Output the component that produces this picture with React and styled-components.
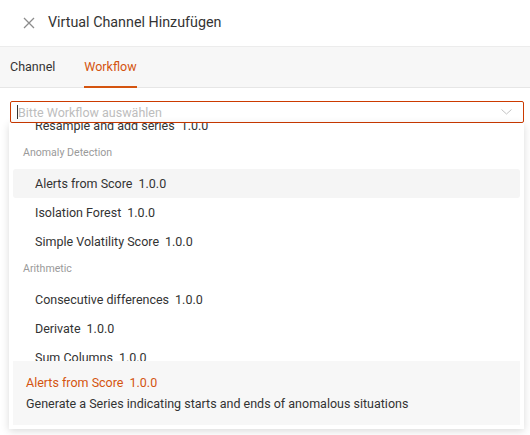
import { useLayoutEffect, useRef } from "react";
import styled, { createGlobalStyle } from "styled-components";

const ACCENT = "#d4540f";

const groups = [
  {
    name: "Resampling",
    items: [{ name: "Resample and add series", version: "1.0.0" }],
  },
  {
    name: "Anomaly Detection",
    anchor: true,
    items: [
      { name: "Alerts from Score", version: "1.0.0", active: true },
      { name: "Isolation Forest", version: "1.0.0" },
      { name: "Simple Volatility Score", version: "1.0.0" },
    ],
  },
  {
    name: "Arithmetic",
    items: [
      { name: "Consecutive differences", version: "1.0.0" },
      { name: "Derivate", version: "1.0.0" },
      { name: "Sum Columns", version: "1.0.0" },
      { name: "Multiply Columns", version: "1.0.0" },
    ],
  },
];

export default function App() {
  const listRef = useRef(null);
  const anchorRef = useRef(null);

  // keep the list scrolled so the highlighted group sits near the top
  useLayoutEffect(() => {
    if (listRef.current && anchorRef.current) {
      listRef.current.scrollTop = anchorRef.current.offsetTop - 17;
    }
  }, []);

  return (
    <>
      <Global />
      <Page>
        <Header>
          <CloseButton aria-label="close">
            <svg width="12" height="12" viewBox="0 0 12 12">
              <path d="M1 1 L11 11 M11 1 L1 11" stroke="#8c8c8c" strokeWidth="1.3" fill="none" />
            </svg>
          </CloseButton>
          <Title>Virtual Channel Hinzufügen</Title>
        </Header>
        <Tabs>
          <Tab>Channel</Tab>
          <Tab active>Workflow</Tab>
        </Tabs>
        <Body>
          <SelectWrap>
            <Select>
              <Caret />
              <Placeholder>Bitte Workflow auswählen</Placeholder>
              <svg width="11" height="6" viewBox="0 0 11 6">
                <path d="M0.5 0.5 L5.5 5 L10.5 0.5" stroke="#c4c4c4" strokeWidth="1" fill="none" />
              </svg>
            </Select>
            <Menu>
              <List ref={listRef}>
                {groups.map((g) => (
                  <div key={g.name}>
                    <GroupLabel ref={g.anchor ? anchorRef : null}>{g.name}</GroupLabel>
                    {g.items.map((it) => (
                      <Item key={it.name} active={it.active}>
                        {it.name}
                        <Version>{it.version}</Version>
                      </Item>
                    ))}
                  </div>
                ))}
              </List>
              <Details>
                <DetailsTitle>
                  Alerts from Score<Version>1.0.0</Version>
                </DetailsTitle>
                <DetailsText>
                  Generate a Series indicating starts and ends of anomalous situations
                </DetailsText>
              </Details>
            </Menu>
          </SelectWrap>
        </Body>
      </Page>
    </>
  );
}

const Global = createGlobalStyle`
  html, body {
    margin: 0;
    background: #fff;
  }
  * {
    box-sizing: border-box;
  }
`;

const Page = styled.div`
  width: 530px;
  height: 435px;
  font-family: Roboto, "Liberation Sans", sans-serif;
  color: #333;
  overflow: hidden;
`;

const Header = styled.div`
  height: 47px;
  display: flex;
  align-items: center;
  padding-left: 23px;
  padding-bottom: 2px;
  border-bottom: 1px solid #ececec;
`;

const CloseButton = styled.span`
  display: flex;
  width: 12px;
  height: 12px;
  margin-right: 13px;
  margin-top: 1px;
`;

const Title = styled.h1`
  margin: 0;
  font-size: 14.3px;
  font-weight: 400;
  color: #333;
`;

const Tabs = styled.div`
  height: 41px;
  display: flex;
  gap: 29px;
  padding-left: 10px;
  background: #f7f7f7;
  border-bottom: 1px solid #e6e6e6;
`;

const Tab = styled.div`
  display: flex;
  align-items: center;
  padding-bottom: 1px;
  font-size: 12.5px;
  color: ${(p) => (p.active ? ACCENT : "#333")};
  border-bottom: 2px solid ${(p) => (p.active ? ACCENT : "transparent")};
  margin-bottom: -1px;
`;

const Body = styled.div`
  padding: 13px 6px 0 10px;
`;

const SelectWrap = styled.div`
  position: relative;
`;

const Select = styled.div`
  height: 22px;
  display: flex;
  align-items: center;
  padding: 0 11px 0 6px;
  border: 1px solid #cc3a00;
  border-radius: 2px;
  background: #fff;
`;

const Caret = styled.span`
  width: 1px;
  height: 14px;
  background: #333;
`;

const Placeholder = styled.span`
  flex: 1;
  font-size: 12.5px;
  color: #bdbdbd;
`;

const Menu = styled.div`
  position: absolute;
  top: 100%;
  left: -1px;
  right: 0;
  height: 306px;
  display: flex;
  flex-direction: column;
  padding: 0 4px 4px;
  background: #fff;
  box-shadow: 0 2px 8px rgba(0, 0, 0, 0.15);
`;

const List = styled.div`
  position: relative;
  flex: 1;
  overflow: hidden;
`;

const GroupLabel = styled.div`
  height: 29px;
  padding: 6px 0 0 10px;
  font-size: 10.6px;
  color: #9a9a9a;
`;

const Item = styled.div`
  height: 29px;
  display: flex;
  align-items: center;
  padding-left: 22px;
  font-size: 12.5px;
  color: #333;
  border-radius: 3px;
  background: ${(p) => (p.active ? "#f5f5f5" : "transparent")};
`;

const Version = styled.span`
  margin-left: 6px;
`;

const Details = styled.div`
  height: 64px;
  padding: 13px 13px 0;
  background: #f7f7f7;
  font-size: 12.5px;
`;

const DetailsTitle = styled.div`
  color: ${ACCENT};
  line-height: 18px;
`;

const DetailsText = styled.div`
  margin-top: 3px;
  color: #333;
  line-height: 18px;
`;
